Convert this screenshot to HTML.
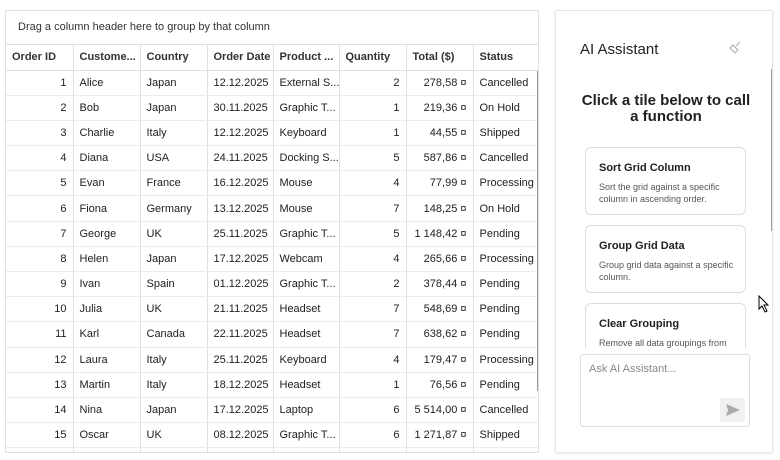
<!DOCTYPE html>
<html><head><style>
*{box-sizing:border-box;margin:0;padding:0}
body{width:780px;height:460px;background:#fff;font-family:"Liberation Sans",sans-serif;color:#212121;position:relative;overflow:hidden;font-size:11px}
.grid{position:absolute;left:5px;top:10px;width:534px;height:443px;border:1px solid #e0e0e0;overflow:hidden}
.grp{height:34px;border-bottom:1px solid #e0e0e0;padding:10px 0 0 12px;font-size:11px;color:#333}
table{border-collapse:collapse;table-layout:fixed;width:533px}
td,th{height:25.2px;border-right:1px solid #e0e0e0;border-bottom:1px solid #ebebeb;padding:0 6px;white-space:nowrap;overflow:hidden;font-size:11px}
th{height:25px;text-align:left;font-weight:bold;border-bottom:1px solid #e0e0e0;color:#333}
td.r{text-align:right}
.sb{position:absolute;left:531px;top:60px;width:2px;height:320px;background:#999}
.ai{position:absolute;left:555px;top:10px;width:218px;height:443px;border:1px solid #e6e6e6;box-shadow:0 1px 3px rgba(0,0,0,.08);overflow:hidden}
.title{position:absolute;left:24px;top:30px;font-size:15px;color:#222}
.h{position:absolute;left:22px;width:176px;top:82px;text-align:center;font-weight:bold;font-size:15px;line-height:16px}
.tile{position:absolute;left:29px;width:161px;height:68px;border:1px solid #ddd;border-radius:6px;padding:14px 0 0 13px;background:#fff}
.tile b{display:block;font-size:11px;margin-bottom:7px}
.tile span{display:block;font-size:9px;color:#555;line-height:12px;width:135px}
.inp{position:absolute;left:24px;top:343px;width:170px;height:73px;border:1px solid #ddd;border-radius:3px;background:#fff;padding:8px;color:#888;font-size:11px}
.send{position:absolute;right:4px;bottom:4px;width:25px;height:24px;background:#f0f0f0;border-radius:3px}
.asb{position:absolute;left:215px;top:58px;width:2px;height:162px;background:#999}
</style></head><body>
<div class="grid">
<div class="grp">Drag a column header here to group by that column</div>
<table>
<colgroup><col style="width:67px"><col style="width:67px"><col style="width:67px"><col style="width:66px"><col style="width:66px"><col style="width:67px"><col style="width:67px"><col style="width:66px"></colgroup>
<tr><th>Order ID</th><th>Custome...</th><th>Country</th><th>Order Date</th><th>Product ...</th><th>Quantity</th><th>Total ($)</th><th>Status</th></tr>
<tr><td class="r">1</td><td>Alice</td><td>Japan</td><td>12.12.2025</td><td>External S...</td><td class="r">2</td><td class="r">278,58 ¤</td><td>Cancelled</td></tr>
<tr><td class="r">2</td><td>Bob</td><td>Japan</td><td>30.11.2025</td><td>Graphic T...</td><td class="r">1</td><td class="r">219,36 ¤</td><td>On Hold</td></tr>
<tr><td class="r">3</td><td>Charlie</td><td>Italy</td><td>12.12.2025</td><td>Keyboard</td><td class="r">1</td><td class="r">44,55 ¤</td><td>Shipped</td></tr>
<tr><td class="r">4</td><td>Diana</td><td>USA</td><td>24.11.2025</td><td>Docking S...</td><td class="r">5</td><td class="r">587,86 ¤</td><td>Cancelled</td></tr>
<tr><td class="r">5</td><td>Evan</td><td>France</td><td>16.12.2025</td><td>Mouse</td><td class="r">4</td><td class="r">77,99 ¤</td><td>Processing</td></tr>
<tr><td class="r">6</td><td>Fiona</td><td>Germany</td><td>13.12.2025</td><td>Mouse</td><td class="r">7</td><td class="r">148,25 ¤</td><td>On Hold</td></tr>
<tr><td class="r">7</td><td>George</td><td>UK</td><td>25.11.2025</td><td>Graphic T...</td><td class="r">5</td><td class="r">1 148,42 ¤</td><td>Pending</td></tr>
<tr><td class="r">8</td><td>Helen</td><td>Japan</td><td>17.12.2025</td><td>Webcam</td><td class="r">4</td><td class="r">265,66 ¤</td><td>Processing</td></tr>
<tr><td class="r">9</td><td>Ivan</td><td>Spain</td><td>01.12.2025</td><td>Graphic T...</td><td class="r">2</td><td class="r">378,44 ¤</td><td>Pending</td></tr>
<tr><td class="r">10</td><td>Julia</td><td>UK</td><td>21.11.2025</td><td>Headset</td><td class="r">7</td><td class="r">548,69 ¤</td><td>Pending</td></tr>
<tr><td class="r">11</td><td>Karl</td><td>Canada</td><td>22.11.2025</td><td>Headset</td><td class="r">7</td><td class="r">638,62 ¤</td><td>Pending</td></tr>
<tr><td class="r">12</td><td>Laura</td><td>Italy</td><td>25.11.2025</td><td>Keyboard</td><td class="r">4</td><td class="r">179,47 ¤</td><td>Processing</td></tr>
<tr><td class="r">13</td><td>Martin</td><td>Italy</td><td>18.12.2025</td><td>Headset</td><td class="r">1</td><td class="r">76,56 ¤</td><td>Pending</td></tr>
<tr><td class="r">14</td><td>Nina</td><td>Japan</td><td>17.12.2025</td><td>Laptop</td><td class="r">6</td><td class="r">5 514,00 ¤</td><td>Cancelled</td></tr>
<tr><td class="r">15</td><td>Oscar</td><td>UK</td><td>08.12.2025</td><td>Graphic T...</td><td class="r">6</td><td class="r">1 271,87 ¤</td><td>Shipped</td></tr>
<tr><td class="r">16</td><td></td><td></td><td></td><td></td><td></td><td></td><td></td></tr>
</table>
<div class="sb"></div>
</div>
<div class="ai">
<div class="title">AI Assistant</div>
<svg style="position:absolute;left:172px;top:30px" width="14" height="14" viewBox="0 0 14 14" fill="none" stroke="#aaa" stroke-width="1"><path d="M12 1 L8 5 M5 4 L10 9 L7 12 L2 7 Z M3 8 L6 11"/></svg>
<div class="asb"></div>
<div class="h">Click a tile below to call a function</div>
<div class="tile" style="top:136px"><b>Sort Grid Column</b><span>Sort the grid against a specific column in ascending order.</span></div>
<div class="tile" style="top:214px"><b>Group Grid Data</b><span>Group grid data against a specific column.</span></div>
<div class="tile" style="top:292px"><b>Clear Grouping</b><span>Remove all data groupings from</span></div>
<div style="position:absolute;left:0;top:337px;width:214px;height:106px;background:#fff"></div>
<div class="inp">Ask AI Assistant...<div class="send"><svg width="25" height="24" viewBox="0 0 25 24"><path d="M6 6 L20 12 L6 18 L8 12 Z" fill="#aaa"/></svg></div></div>
</div>
<svg style="position:absolute;left:758px;top:295px" width="12" height="18" viewBox="0 0 12 18"><path d="M1 1 L1 14 L4 11 L7 17 L9 16 L6 10 L10 10 Z" fill="#fff" stroke="#000" stroke-width="1"/></svg>
</body></html>
